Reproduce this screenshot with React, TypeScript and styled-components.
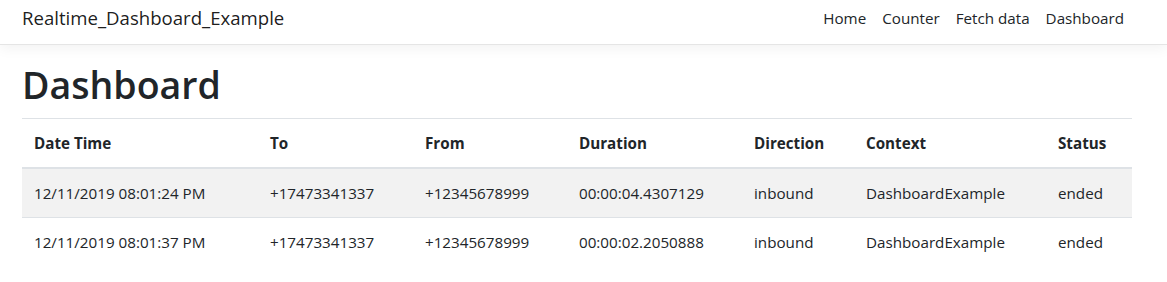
import React from "react";
import styled, { createGlobalStyle } from "styled-components";

const GlobalStyle = createGlobalStyle`
  html, body {
    margin: 0;
    padding: 0;
    background: #fff;
  }
  body {
    font-family: "Segoe UI", "Open Sans", "Liberation Sans", sans-serif;
    font-size: 15.2px;
    line-height: 24px;
    color: #212529;
  }
  * {
    box-sizing: border-box;
  }
`;

const Navbar = styled.nav`
  height: 45px;
  border-bottom: 1px solid #e5e5e5;
  box-shadow: 0 4px 12px rgba(0, 0, 0, 0.05);
  margin-bottom: 16px;
`;

const NavInner = styled.div`
  width: 1110px;
  margin-left: 22px;
  height: 100%;
  padding-bottom: 9px;
  display: flex;
  align-items: center;
  justify-content: space-between;
`;

const Brand = styled.a`
  font-size: 18.6px;
  line-height: 30px;
  color: rgba(0, 0, 0, 0.9);
  text-decoration: none;
`;

const NavList = styled.ul`
  display: flex;
  list-style: none;
  margin: 0;
  padding: 0;
`;

const NavLink = styled.a`
  display: block;
  padding: 8px;
  color: #212529;
  text-decoration: none;
`;

const Main = styled.main`
  width: 1110px;
  margin-left: 22px;
`;

const Title = styled.h1`
  font-size: 37.5px;
  font-weight: 600;
  line-height: 48px;
  margin: 0 0 9px;
`;

const Table = styled.table`
  width: 100%;
  border-collapse: collapse;
  table-layout: fixed;
`;

const HeadCell = styled.th<{ $w: number }>`
  width: ${(p) => p.$w}px;
  text-align: left;
  font-weight: 700;
  padding: 12px;
  border-top: 1px solid #dee2e6;
  border-bottom: 2px solid #dee2e6;
`;

const Row = styled.tr<{ $striped?: boolean }>`
  background: ${(p) => (p.$striped ? "rgba(0, 0, 0, 0.05)" : "transparent")};
`;

const Cell = styled.td`
  padding: 12px;
  border-top: 1px solid #dee2e6;
  white-space: nowrap;
`;

const columns = [
  { label: "Date Time", width: 236 },
  { label: "To", width: 155 },
  { label: "From", width: 154 },
  { label: "Duration", width: 175 },
  { label: "Direction", width: 112 },
  { label: "Context", width: 192 },
  { label: "Status", width: 86 },
];

const calls = [
  ["12/11/2019 08:01:24 PM", "+17473341337", "+12345678999", "00:00:04.4307129", "inbound", "DashboardExample", "ended"],
  ["12/11/2019 08:01:37 PM", "+17473341337", "+12345678999", "00:00:02.2050888", "inbound", "DashboardExample", "ended"],
];

const links = ["Home", "Counter", "Fetch data", "Dashboard"];

export default function App() {
  return (
    <>
      <GlobalStyle />
      <Navbar>
        <NavInner>
          <Brand href="#">Realtime_Dashboard_Example</Brand>
          <NavList>
            {links.map((l) => (
              <li key={l}>
                <NavLink href="#">{l}</NavLink>
              </li>
            ))}
          </NavList>
        </NavInner>
      </Navbar>
      <Main>
        <Title>Dashboard</Title>
        <Table>
          <thead>
            <tr>
              {columns.map((c) => (
                <HeadCell key={c.label} $w={c.width}>
                  {c.label}
                </HeadCell>
              ))}
            </tr>
          </thead>
          <tbody>
            {calls.map((row, i) => (
              <Row key={i} $striped={i % 2 === 0}>
                {row.map((v, j) => (
                  <Cell key={j}>{v}</Cell>
                ))}
              </Row>
            ))}
          </tbody>
        </Table>
      </Main>
    </>
  );
}
